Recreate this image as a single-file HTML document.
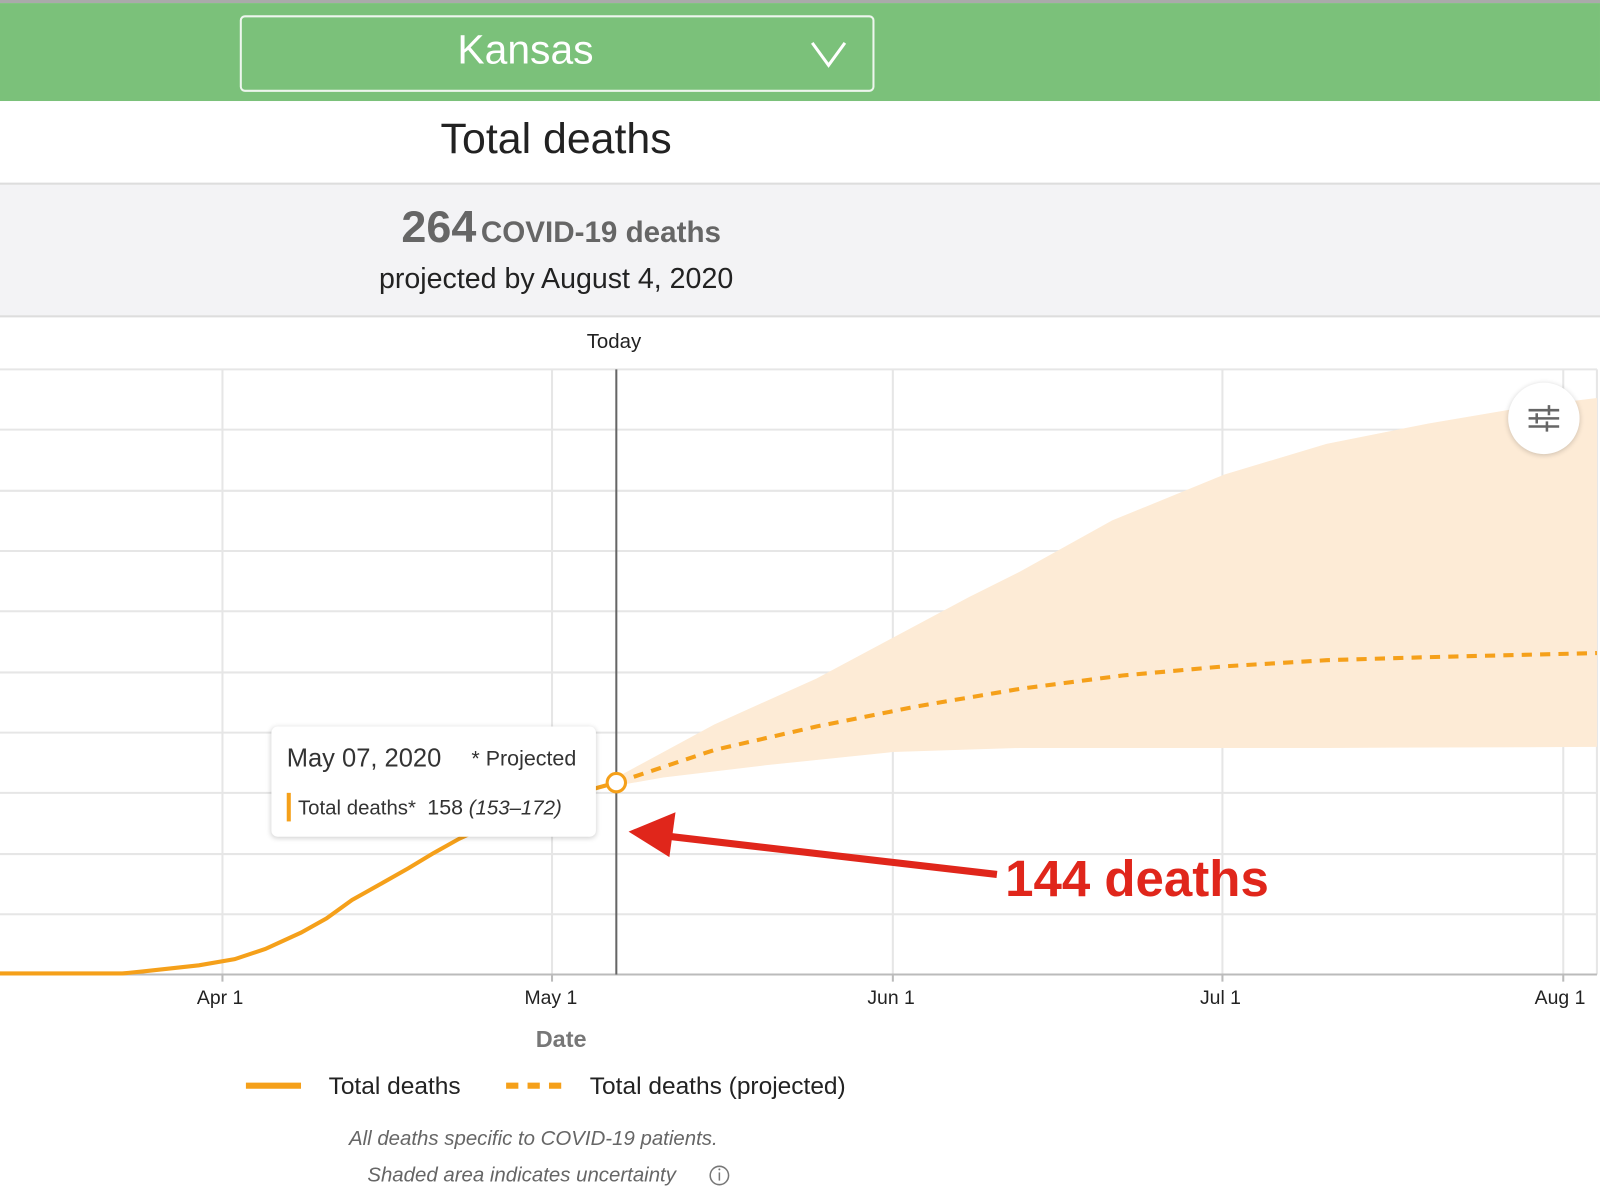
<!DOCTYPE html>
<html><head><meta charset="utf-8"><style>
body{margin:0;width:1600px;height:1203px;overflow:hidden;background:#fff;font-family:"Liberation Sans",sans-serif}
#w{position:absolute;left:0;top:0;width:1568px;height:1179px;transform:scale(1.0204);transform-origin:0 0}
.abs{position:absolute}
</style></head><body><div id="w">
<div class="abs" style="left:0;top:0;width:1568px;height:3px;background:#aaa"></div>
<div class="abs" style="left:0;top:3px;width:1568px;height:96px;background:#7bc17a"></div>
<div class="abs" style="left:235px;top:15px;width:618px;height:71px;border:2px solid #eef6ee;border-radius:5px"></div>
<div class="abs" style="left:235px;top:27px;width:560px;text-align:center;color:#fff;font-size:40px">Kansas</div>
<svg class="abs" style="left:792px;top:38px" width="42" height="30"><path d="M4 4 L20 26 L36 4" stroke="#fff" stroke-width="3" fill="none"/></svg>
<div class="abs" style="left:0;top:112px;width:1090px;text-align:center;font-size:42px;color:#222">Total deaths</div>
<div class="abs" style="left:0;top:179px;width:1568px;height:128px;background:#f3f3f5;border-top:2px solid #ddd;border-bottom:2px solid #ddd"></div>
<div class="abs" style="left:0;top:198px;width:1100px;text-align:center;color:#666;font-weight:bold"><span style="font-size:44px">264</span> <span style="font-size:29px">COVID-19 deaths</span></div>
<div class="abs" style="left:0;top:257px;width:1090px;text-align:center;font-size:28px;color:#222">projected by August 4, 2020</div>
<div class="abs" style="left:575px;top:324px;font-size:20px;color:#222">Today</div>
<svg class="abs" style="left:0;top:0" width="1568" height="1179">
<g stroke="#e6e6e6" stroke-width="2">
<line x1="0" y1="362" x2="1565" y2="362"/><line x1="0" y1="421" x2="1565" y2="421"/><line x1="0" y1="481" x2="1565" y2="481"/><line x1="0" y1="540" x2="1565" y2="540"/><line x1="0" y1="599" x2="1565" y2="599"/><line x1="0" y1="659" x2="1565" y2="659"/><line x1="0" y1="718" x2="1565" y2="718"/><line x1="0" y1="777" x2="1565" y2="777"/><line x1="0" y1="837" x2="1565" y2="837"/><line x1="0" y1="896" x2="1565" y2="896"/>
<line x1="218" y1="362" x2="218" y2="955"/><line x1="541" y1="362" x2="541" y2="955"/><line x1="875" y1="362" x2="875" y2="955"/><line x1="1198" y1="362" x2="1198" y2="955"/><line x1="1532" y1="362" x2="1532" y2="955"/><line x1="1565" y1="362" x2="1565" y2="955"/>
</g>
<line x1="0" y1="955" x2="1565" y2="955" stroke="#bbb" stroke-width="2"/>
<g stroke="#bbb" stroke-width="2"><line x1="218" y1="955" x2="218" y2="962"/><line x1="541" y1="955" x2="541" y2="962"/><line x1="875" y1="955" x2="875" y2="962"/><line x1="1198" y1="955" x2="1198" y2="962"/><line x1="1532" y1="955" x2="1532" y2="962"/></g>
<path d="M604 762 L700 710 L800 665 L875 625 L950 585 L1000 560 L1090 510 L1200 465 L1300 435 L1400 415 L1500 398 L1565 390 L1565 732 L1300 733 L1000 733 L875 737 L750 750 L650 762 L604 770 Z" fill="#fdebd6"/>
<path d="M0 954 L120 954 L140 952 L195 946 L230 940 L260 930 L295 914 L320 900 L345 882 L370 868 L400 851 L425 836 L450 822 L480 808 L520 792 L560 779 L604 767" stroke="#f5a01a" stroke-width="4" fill="none"/>
<path d="M604 767 L700 735 L800 712 L900 692 L1000 675 L1100 662 L1200 653 L1300 647 L1400 644 L1565 640" stroke="#f5a01a" stroke-width="4" fill="none" stroke-dasharray="10 8"/>
<line x1="604" y1="362" x2="604" y2="955" stroke="#666" stroke-width="2"/>
<circle cx="604" cy="767" r="9" fill="#fff" stroke="#f5a01a" stroke-width="3"/>
<line x1="977" y1="857" x2="650" y2="819" stroke="#e0261b" stroke-width="7"/>
<path d="M616 815 L662 796 L656 840 Z" fill="#e0261b"/>
<line x1="241" y1="1064" x2="295" y2="1064" stroke="#f5a01a" stroke-width="6"/>
<line x1="496" y1="1064" x2="550" y2="1064" stroke="#f5a01a" stroke-width="6" stroke-dasharray="12 9"/>
<circle cx="705" cy="1152" r="9" fill="none" stroke="#777" stroke-width="1.5"/>
<line x1="705" y1="1149" x2="705" y2="1157" stroke="#777" stroke-width="1.5"/><circle cx="705" cy="1146" r="1" fill="#777"/>
</svg>
<div class="abs" style="left:1478px;top:375px;width:70px;height:70px;border-radius:50%;background:#fff;box-shadow:0 1px 5px rgba(0,0,0,.2)"></div>
<svg class="abs" style="left:1496px;top:396px" width="34" height="28"><g stroke="#666" stroke-width="2.5"><line x1="2" y1="6" x2="32" y2="6"/><line x1="2" y1="14" x2="32" y2="14"/><line x1="2" y1="22" x2="32" y2="22"/><line x1="22" y1="1" x2="22" y2="11"/><line x1="10" y1="9" x2="10" y2="19"/><line x1="20" y1="17" x2="20" y2="27"/></g></svg>
<div class="abs" style="left:266px;top:712px;width:318px;height:108px;background:#fff;border-radius:6px;box-shadow:0 1px 5px rgba(0,0,0,.2)"></div>
<div class="abs" style="left:281px;top:729px;font-size:25px;color:#333">May 07, 2020</div>
<div class="abs" style="left:462px;top:732px;font-size:21px;color:#333">* Projected</div>
<div class="abs" style="left:281px;top:777px;width:4px;height:28px;background:#f5a01a"></div>
<div class="abs" style="left:292px;top:780px;font-size:20px;color:#333">Total deaths*&nbsp; <b style="font-weight:normal;font-size:21px">158</b> <i>(153–172)</i></div>
<div class="abs" style="left:985px;top:832px;font-size:50px;font-weight:bold;color:#e0261b">144 deaths</div>
<div class="abs" style="left:193px;top:968px;font-size:19px;color:#222">Apr 1</div>
<div class="abs" style="left:514px;top:968px;font-size:19px;color:#222">May 1</div>
<div class="abs" style="left:850px;top:968px;font-size:19px;color:#222">Jun 1</div>
<div class="abs" style="left:1176px;top:968px;font-size:19px;color:#222">Jul 1</div>
<div class="abs" style="left:1504px;top:968px;font-size:19px;color:#222">Aug 1</div>
<div class="abs" style="left:525px;top:1005px;font-size:23px;color:#777;font-weight:bold">Date</div>
<div class="abs" style="left:322px;top:1051px;font-size:24px;color:#222">Total deaths</div>
<div class="abs" style="left:578px;top:1051px;font-size:24px;color:#222">Total deaths (projected)</div>
<div class="abs" style="left:342px;top:1105px;font-size:20px;color:#666;font-style:italic">All deaths specific to COVID-19 patients.</div>
<div class="abs" style="left:360px;top:1141px;font-size:20px;color:#666;font-style:italic">Shaded area indicates uncertainty</div>
</div></body></html>
